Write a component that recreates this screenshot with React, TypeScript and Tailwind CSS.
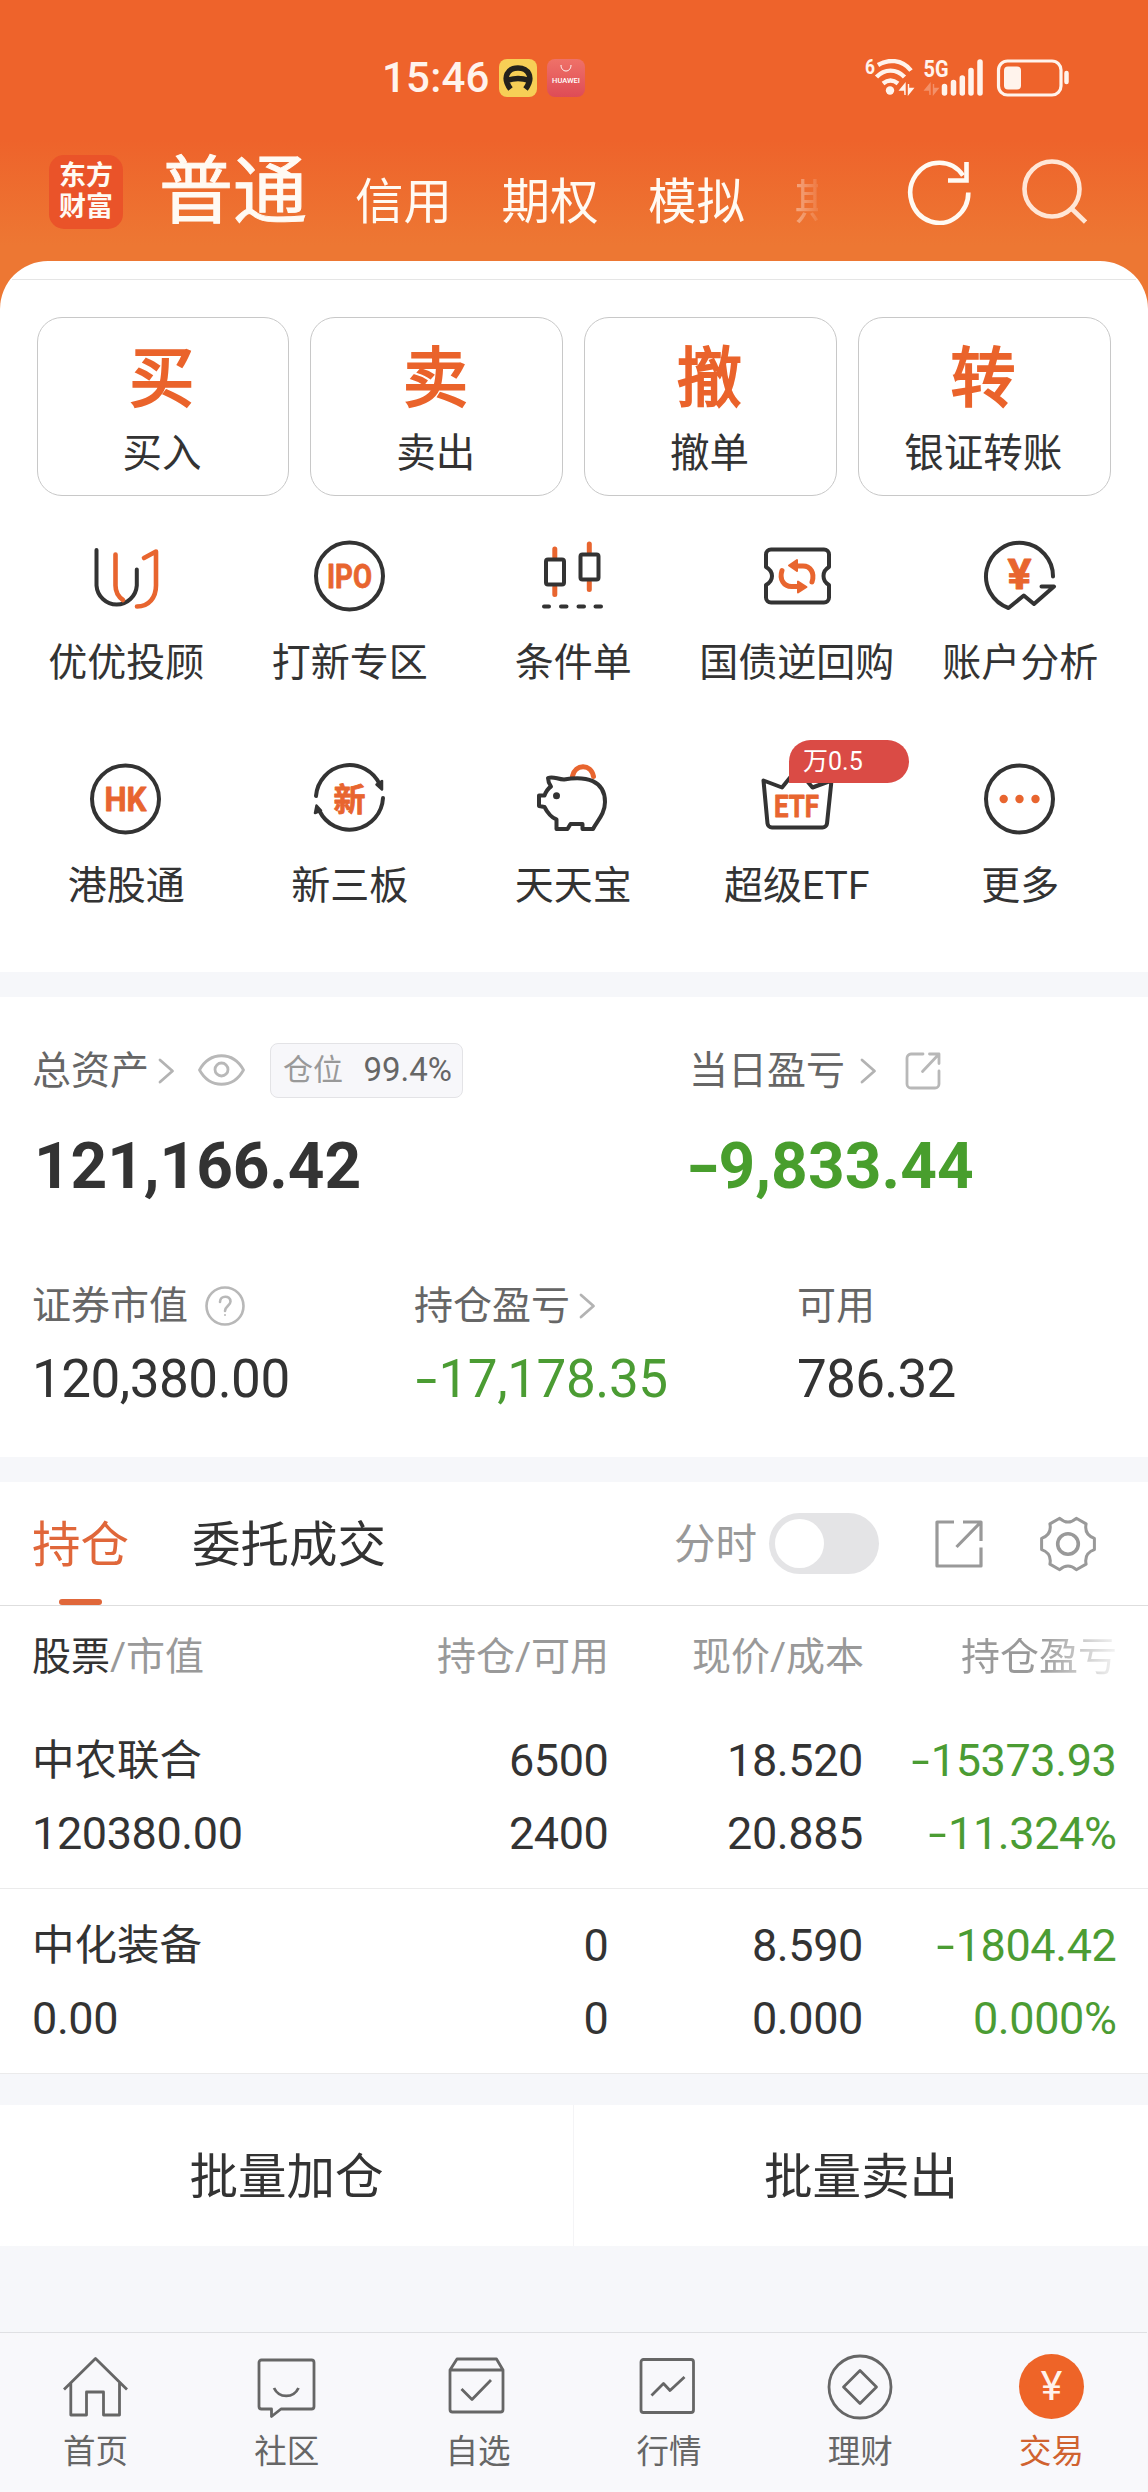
import type { ReactNode } from "react";

const ORANGE = "#e8652f";
const DARK = "#333333";

interface ShortcutProps {
  label: string;
  icon: ReactNode;
  badge?: string;
}

function Glyph({ children }: { children: ReactNode }) {
  return (
    <svg className="w-[76px] h-[76px] overflow-visible" viewBox="0 0 76 76" fill="none" stroke={DARK} strokeWidth="4" strokeLinecap="round" strokeLinejoin="round">
      {children}
    </svg>
  );
}

function GlyphText({ text, width, size, y }: { text: string; width: number; size: number; y: number }) {
  return (
    <text x="37.5" y={y} textAnchor="middle" textLength={width} lengthAdjust="spacingAndGlyphs" fontSize={size} fontWeight="700" fill={ORANGE} stroke={ORANGE} strokeWidth="0.8">
      {text}
    </text>
  );
}

const shortcuts: ShortcutProps[] = [
  {
    label: "优优投顾",
    icon: (
      <Glyph>
        <path d="M8.5 12v35.5a20.2 20.5 0 0 0 40.3 0V31.5" />
        <path d="M27.5 16.5v31c0 6.500 2.500 11 7.500 14.500M49 68.500c12 0 19-9 19-21v-34L56 20" stroke={ORANGE} strokeWidth="4.600" />
      </Glyph>
    ),
  },
  {
    label: "打新专区",
    icon: (
      <Glyph>
        <circle cx="37.500" cy="38" r="33.500" />
        <GlyphText text="IPO" width={45} size={33} y={49.8} />
      </Glyph>
    ),
  },
  {
    label: "条件单",
    icon: (
      <Glyph>
        <path d="M19.800 11v8M19.800 49v7.500M54.300 6v8M54.300 44v7.500" stroke={ORANGE} strokeWidth="5" />
        <rect x="11" y="21.500" width="18" height="25" rx="2" />
        <rect x="45.500" y="16.500" width="18" height="25" rx="2" />
        <path d="M9 68.500h5M26 68.500h5.500M43.500 68.500H49M60.500 68.500H66" />
      </Glyph>
    ),
  },
  {
    label: "国债逆回购",
    icon: (
      <Glyph>
        <path d="M12 11.500h53a5 5 0 0 1 5 5V29c-3.500 2-5.500 5-5.500 9s2 7 5.500 9v12.500a5 5 0 0 1-5 5H12a5 5 0 0 1-5-5V47c3.500-2 6-5 6-9s-2.500-7-6-9V16.500a5 5 0 0 1 5-5z" />
        <path d="M53 44c3-9-1.500-16-9-16h-6M23 32.500c-3 9 2 16 9.500 16H39" stroke={ORANGE} strokeWidth="5" />
        <path d="M30 27.500l8-5.500v11zM47.500 49l-8.500-5.500v11z" fill={ORANGE} stroke={ORANGE} strokeWidth="2" />
      </Glyph>
    ),
  },
  {
    label: "账户分析",
    icon: (
      <Glyph>
        <path d="M71 38.500A33.500 33.500 0 1 0 26.500 70L41.800 57.500 52 66 72 48.500H59.500" />
        <GlyphText text="¥" width={24} size={42} y={50.5} />
      </Glyph>
    ),
  },
  {
    label: "港股通",
    icon: (
      <Glyph>
        <circle cx="37.500" cy="38" r="33.500" />
        <GlyphText text="HK" width={42} size={33} y={49.8} />
      </Glyph>
    ),
  },
  {
    label: "新三板",
    icon: (
      <Glyph>
        <path d="M4 35A33.500 33.500 0 0 1 68 24M71 37A33.500 33.500 0 0 1 7.500 50" />
        <path d="M70 28.500l-5.500-5 5.500-3.500zM4.500 44.500l4.500 5-6 2.500z" fill={DARK} strokeWidth="2.500" />
        <GlyphText text="新" width={32} size={32} y={49.5} />
      </Glyph>
    ),
  },
  {
    label: "天天宝",
    icon: (
      <Glyph>
        <path d="M37.500 15C40 3 56 2 58.500 15.500" stroke={ORANGE} strokeWidth="5" />
        <path d="M13 17c5-2 9 1 16 1.500 22-4 41 1 41 22.500 0 12-8 19-12 27H47.500v-5H35.500l-3 5h-11V58.500C17 57 12 51 9.500 46L4 45V34.500h5.500c1.500-4 3.500-7 6.500-9-2-3-3-5-3-8.500z" />
        <circle cx="21.500" cy="34.700" r="3.500" fill={DARK} stroke="none" />
      </Glyph>
    ),
  },
  {
    label: "超级ETF",
    badge: "万0.5",
    icon: (
      <Glyph>
        <path d="M4.500 19.500L23 26.500 38 8l15.500 18.500 19-7L68 62.500a4.500 4.500 0 0 1-4.500 4H13a4.500 4.500 0 0 1-4.500-4z" />
        <GlyphText text="ETF" width={45} size={32} y={56} />
      </Glyph>
    ),
  },
  {
    label: "更多",
    icon: (
      <Glyph>
        <circle cx="37.500" cy="38" r="33.500" />
        <g fill={ORANGE} stroke="none">
          <circle cx="21.700" cy="38" r="4.200" />
          <circle cx="37.500" cy="38" r="4.200" />
          <circle cx="53.500" cy="38" r="4.200" />
        </g>
      </Glyph>
    ),
  },
];

const actions = [
  { mark: "买", label: "买入" },
  { mark: "卖", label: "卖出" },
  { mark: "撤", label: "撤单" },
  { mark: "转", label: "银证转账" },
];

const holdings = [
  { name: "中农联合", value: "120380.00", held: "6500", usable: "2400", price: "18.520", cost: "20.885", profit: "-15373.93", rate: "-11.324%" },
  { name: "中化装备", value: "0.00", held: "0", usable: "0", price: "8.590", cost: "0.000", profit: "-1804.42", rate: "0.000%" },
];

const tabs = [
  {
    label: "首页",
    icon: <path d="M1 35.500L32.500 4.500l31.500 31M7.800 29v32h15.700V38h17v23h16V29" />,
  },
  {
    label: "社区",
    icon: <path d="M7.500 6h50a2.500 2.500 0 0 1 2.500 2.500v44a2.500 2.500 0 0 1-2.500 2.500H27l-9.500 7.500V55h-10A2.500 2.500 0 0 1 5 52.500v-44A2.500 2.500 0 0 1 7.500 6zM20 34c5 10.500 19.500 10.500 24.500 0" />,
  },
  {
    label: "自选",
    icon: <path d="M5 16L12 5h39.500L58 16v39.500a2.500 2.500 0 0 1-2.500 2.500h-48A2.500 2.500 0 0 1 5 55.500zM5 16h53M16.500 35l10.500 10.500L46 26" />,
  },
  {
    label: "行情",
    icon: <path d="M7.500 5.500H55a2.500 2.500 0 0 1 2.500 2.500v48a2.500 2.500 0 0 1-2.500 2.500H7.500A2.500 2.500 0 0 1 5 56V8a2.500 2.500 0 0 1 2.500-2.500zM15.500 41.500l12-12 6.500 7 14.500-13.500" />,
  },
  {
    label: "理财",
    icon: (
      <>
        <circle cx="33" cy="33" r="31" />
        <path d="M33 16.500L49.500 33 33 49.500 16.500 33z" />
      </>
    ),
  },
];

// Minus sign is drawn wider than the font's own hyphen
function Amount({ value }: { value: string }) {
  if (!value.startsWith("-")) return <>{value}</>;
  return (
    <>
      <span className="inline-block w-[0.46em] text-center scale-x-[1.45]">-</span>
      {value.slice(1)}
    </>
  );
}

function Chevron() {
  return (
    <svg className="w-[17px] h-[26px]" viewBox="0 0 17 26" fill="none" stroke="#b3b3b3" strokeWidth="2.800" strokeLinecap="round" strokeLinejoin="round">
      <path d="M2 2l12.500 11L2 24" />
    </svg>
  );
}

function StatusBar() {
  return (
    <div className="flex h-[38px] items-center pl-[382px] pr-[77px]">
      <span className="w-[117px] text-[42px] font-medium leading-none tracking-[0.2px] text-[#fff3ec]">15:46</span>
      <span className="flex h-[38px] w-[38px] items-center justify-center rounded-[8px] bg-[#f7cf56]">
        <svg className="w-[30px] h-[26px]" viewBox="0 0 30 26" fill="none" stroke="#24221c" strokeWidth="5.500">
          <path d="M7.500 24C-1.500 12 5 3 15 3s16.500 9 7.500 21M4 15.500c7-2.500 15-2.500 22 0" />
        </svg>
      </span>
      <span className="ml-[10px] flex h-[38px] w-[38px] flex-col items-center rounded-[8px] bg-linear-to-b from-[#ef7168] to-[#de4b56] text-white">
        <svg className="mt-[5px] w-[12px] h-[8px]" viewBox="0 0 12 8" fill="none" stroke="currentColor" strokeWidth="1">
          <path d="M1 1c0 8 10 8 10 0" />
        </svg>
        <span className="mt-[4px] text-[7.500px] font-medium leading-[10px]">HUAWEI</span>
      </span>
      <svg className="ml-auto w-[206px] h-[38px]" viewBox="0 0 206 38" fill="none" stroke="#fff3ec" strokeWidth="4.400">
        <text x="0" y="15" fontSize="21" fontWeight="700" fill="#fff3ec" stroke="none" textLength="10" lengthAdjust="spacingAndGlyphs">6</text>
        <path d="M13 6c10-6 24-6 33 5.500" />
        <path d="M11.500 18c8-8.500 20-8.500 28 0" />
        <path d="M18 24.500c5-4 10-4 15 0" />
        <circle cx="25" cy="31.500" r="4.200" fill="#fff3ec" stroke="none" />
        <path d="M40 36V25l-5 6H39M43.500 25v10l4.500-5.500H44" fill="#fff3ec" strokeWidth="1.400" />
        <text x="58.500" y="17.500" fontSize="24" fontWeight="700" fill="#fff3ec" stroke="none" textLength="25" lengthAdjust="spacingAndGlyphs">5G</text>
        <path d="M65 36V25l-5 6H64M68.500 25v10l4.500-5.500H69" fill="#f3916a" stroke="#f3916a" strokeWidth="1.400" />
        <path d="M79.500 27.500v6.500M88.500 23.500V34M97.300 19v15M106 11.500V34M115 3V34" strokeWidth="5.500" strokeLinecap="round" />
        <rect x="133.500" y="2" width="62.500" height="34" rx="9" strokeWidth="3.200" />
        <rect x="139" y="7.500" width="17" height="23" rx="4" fill="#fff3ec" stroke="none" />
        <path d="M201.500 14v9" strokeWidth="4.500" strokeLinecap="round" />
      </svg>
    </div>
  );
}

function TopNav() {
  return (
    <div className="mt-[58px] flex h-[106px] items-start pl-[49px] text-[#fffaf3]">
      <div className="flex h-[74px] w-[74px] flex-col items-center justify-center rounded-[15px] bg-[#ea5329] text-[27px] font-bold leading-[31px]">
        <span>东方</span>
        <span>财富</span>
      </div>
      <span className="ml-[36px] text-[74px] leading-none [-webkit-text-stroke:1px]">普通</span>
      <div className="ml-[48px] mt-[24px] flex gap-[49.500px] text-[48.500px] leading-none">
        <span>信用</span>
        <span>期权</span>
        <span>模拟</span>
        <span className="w-[23px] overflow-hidden whitespace-nowrap bg-linear-to-r from-white/40 to-white/10 bg-clip-text text-transparent">期</span>
      </div>
      <svg className="ml-auto mr-[61px] mt-[2px] w-[182px] h-[68px]" viewBox="0 0 182 68" fill="none" strokeWidth="4.600">
        <path d="M63.300 35.500A29 30 0 1 1 58 18.500" stroke="#fffaf3" />
        <path d="M61.500 5v18.500H43" stroke="#fffaf3" />
        <circle cx="147" cy="32" r="27.500" stroke="#ffe6d6" />
        <path d="M167 52L180.500 65" stroke="#ffe6d6" />
      </svg>
    </div>
  );
}

function Shortcut({ label, icon, badge }: ShortcutProps) {
  return (
    <div className="relative flex flex-col items-center">
      {icon}
      <span className="mt-[30px] whitespace-nowrap text-[39px] leading-none">{label}</span>
      {badge && (
        <span className="absolute left-[104px] top-[-21px] h-[43px] w-[120px] rounded-[22px] rounded-bl-none bg-[#da4b45] pl-[14px] text-[25px] leading-[44px] text-white">
          {badge}
        </span>
      )}
    </div>
  );
}

function Assets() {
  return (
    <section className="h-[460px] bg-white pl-[32px] pt-[46px] text-[39px] leading-none text-[#666]">
      <div className="flex">
        <div className="w-[657px]">
          <div className="flex h-[56px] items-center">
            <span>总资产</span>
            <span className="ml-[9px]"><Chevron /></span>
            <svg className="mb-[3px] ml-[23px] w-[47px] h-[36px]" viewBox="0 0 47 36" fill="none" stroke="#b8b8b8" strokeWidth="2.800">
              <path d="M1.500 18C12-1 35-1 45.500 18 35 37 12 37 1.500 18z" strokeLinejoin="round" />
              <circle cx="23.500" cy="17.500" r="6.500" />
            </svg>
            <span className="mb-[2px] ml-[25px] flex h-[55px] w-[193px] items-center justify-between rounded-[8px] border border-[#e3e3e6] bg-[#f7f7fa] pl-[12px] pr-[10px]">
              <span className="text-[30px] text-[#999]">仓位</span>
              <span className="pb-px text-[33px]">99.4%</span>
            </span>
          </div>
          <div className="ml-[2px] mt-[36px] text-[64px] font-bold tracking-[-0.1px] text-[#333]">121,166.42</div>
        </div>
        <div>
          <div className="flex h-[56px] items-center">
            <span>当日盈亏</span>
            <span className="ml-[15px]"><Chevron /></span>
            <svg className="ml-[28px] w-[36px] h-[38px]" viewBox="0 0 36 38" fill="none" stroke="#b8b8b8" strokeWidth="2.800" strokeLinecap="round" strokeLinejoin="round">
              <path d="M18 2H6a4 4 0 0 0-4 4v26a4 4 0 0 0 4 4h24a4 4 0 0 0 4-4V19M24.500 2H34v9.500M34 2L17.500 19.500" />
            </svg>
          </div>
          <div className="mt-[36px] text-[64px] font-bold tracking-[0.100px] text-[#489e2d]">
            <Amount value="-9,833.44" />
          </div>
        </div>
      </div>
      <div className="mt-[87px] flex">
        <div className="w-[382px]">
          <div className="flex h-[40px] items-center">
            证券市值
            <svg className="ml-[17px] w-[40px] h-[40px]" viewBox="0 0 40 40" fill="none" stroke="#b8b8b8" strokeWidth="2.600">
              <circle cx="20" cy="20" r="18.500" />
              <path d="M15 16c0-7 10.500-7 10.500-.5 0 4-5.500 4.500-5.500 9.500" strokeLinecap="round" />
              <circle cx="20" cy="29" r="1" fill="#b8b8b8" stroke="none" />
            </svg>
          </div>
          <div className="mt-[27px] text-[53px] tracking-[-0.500px] text-[#333]">120,380.00</div>
        </div>
        <div className="w-[383px]">
          <div className="flex h-[40px] items-center">
            持仓盈亏
            <span className="ml-[9px]"><Chevron /></span>
          </div>
          <div className="mt-[27px] text-[53px] tracking-[-0.400px] text-[#4b9c33]">
            <Amount value="-17,178.35" />
          </div>
        </div>
        <div>
          <div className="flex h-[40px] items-center">可用</div>
          <div className="mt-[27px] text-[53px] tracking-[-0.700px] text-[#333]">786.32</div>
        </div>
      </div>
    </section>
  );
}

function HoldingTabs() {
  return (
    <div className="flex h-[124px] items-center border-b border-[#dedede] bg-white pl-[32px] pr-[52px] text-[48.500px] leading-none">
      <div className="relative flex h-full items-center pt-[5px] text-[#e0673a]">
        持仓
        <span className="absolute bottom-0 left-[27px] h-[6px] w-[43px] rounded-full bg-[#e0673a]" />
      </div>
      <span className="ml-[63px] pt-[5px]">委托成交</span>
      <span className="ml-auto pt-[3px] text-[41.500px] text-[#999]">分时</span>
      <span className="ml-[12px] flex h-[61px] w-[110px] items-center rounded-full bg-[#e4e4e6] pl-[6px]">
        <span className="h-[49px] w-[49px] rounded-full bg-white" />
      </span>
      <svg className="ml-[55px] w-[49px] h-[50px]" viewBox="0 0 49 50" fill="none" stroke="#999" strokeWidth="3.200" strokeLinejoin="round">
        <path d="M20 3H3v44h44V28.500M29 3h18v19M46 4L22.500 28" />
      </svg>
      <svg className="ml-[57px] w-[56px] h-[56px]" viewBox="0 0 56 56" fill="none" stroke="#999" strokeWidth="3" strokeLinejoin="round">
        <path d="M54.400 22.400v11.200Q43.900 37.200 46.100 48.100L36.300 53.700Q28 46.300 19.700 53.700L9.900 48.100Q12.100 37.200 1.600 33.600V22.400Q12.100 18.800 9.900 7.900L19.700 2.300Q28 9.700 36.300 2.300L46.100 7.900Q43.900 18.800 54.400 22.400z" />
        <circle cx="28" cy="28" r="10.300" strokeWidth="3.600" />
      </svg>
    </div>
  );
}

function HoldingTable() {
  return (
    <div className="bg-white">
      <div className="grid h-[98px] grid-cols-[322px_255px_255px_253px] pl-[32px] pt-[32px] text-[39px] leading-none text-[#999]">
        <span><span className="text-[#333]">股票</span>/市值</span>
        <span className="text-right">持仓/可用</span>
        <span className="text-right">现价/成本</span>
        <span className="flex justify-end">
          <span className="bg-[linear-gradient(to_right,#999_50%,#f4f4f4)] bg-clip-text text-transparent">持仓盈亏</span>
        </span>
      </div>
      {holdings.map((row) => (
        <div key={row.name} className="grid h-[185px] grid-cols-[322px_254.500px_254.500px_253.500px] grid-rows-[46px_46px] gap-y-[27px] border-b border-[#ebebeb] pl-[32px] pt-[34px] text-right text-[45px] leading-[46px] tracking-[-0.400px]">
          <span className="text-left text-[42.500px] tracking-normal">{row.name}</span>
          <span>{row.held}</span>
          <span>{row.price}</span>
          <span className="text-[#4b9c33]"><Amount value={row.profit} /></span>
          <span className="text-left">{row.value}</span>
          <span>{row.usable}</span>
          <span>{row.cost}</span>
          <span className="text-[#4b9c33]"><Amount value={row.rate} /></span>
        </div>
      ))}
    </div>
  );
}

function BottomNav() {
  return (
    <nav className="mt-[86px] grid h-[160px] w-[1147px] grid-cols-6 border-t border-[#dfe0e3] bg-[#f8f8fb] pt-[21px] text-[32.500px] leading-none text-[#666]">
      {tabs.map((tab) => (
        <div key={tab.label} className="flex flex-col items-center">
          <svg className="w-[66px] h-[66px]" viewBox="0 0 66 66" fill="none" stroke="#666" strokeWidth="2.800" strokeLinejoin="round">
            {tab.icon}
          </svg>
          <span className="mt-[16px]">{tab.label}</span>
        </div>
      ))}
      <div className="flex flex-col items-center text-[#d0622f]">
        <span className="flex h-[65px] w-[65px] items-center justify-center rounded-full bg-[#ee6428] text-[41px] text-[#fff3ec]">¥</span>
        <span className="mt-[17px]">交易</span>
      </div>
    </nav>
  );
}

export default function App() {
  return (
    <div className="h-[2492px] w-[1148px] overflow-hidden bg-[#f6f7fa] font-['Roboto','Noto_Sans_CJK_SC',sans-serif] text-[#333]">
      <div className="bg-[linear-gradient(#ee632b_0px,#ee632b_140px,#ed7733_245px,#ed7733_320px)]">
        <header className="h-[261px] pt-[59px]">
          <StatusBar />
          <TopNav />
        </header>
        <section className="h-[711px] rounded-t-[48px] bg-white pt-[18px]">
          <div className="mx-[12px] h-px bg-[#e5e5e5]" />
          <div className="mt-[37px] grid grid-cols-4 gap-[21px] pl-[36.500px] pr-[37.500px]">
            {actions.map((action) => (
              <div key={action.label} className="flex h-[179px] flex-col items-center rounded-[25px] border border-[#c8c8c8] pr-[2px] pt-[29px]">
                <span className="text-[65px] leading-none text-[#ea632b] [-webkit-text-stroke:2.200px]">{action.mark}</span>
                <span className="mt-[22px] text-[39.500px] leading-none">{action.label}</span>
              </div>
            ))}
          </div>
          <div className="mt-[42px] grid grid-cols-5 gap-y-[78px] pl-[14.500px] pr-[16px]">
            {shortcuts.map((item) => (
              <Shortcut key={item.label} {...item} />
            ))}
          </div>
        </section>
      </div>
      <div className="h-[25px]" />
      <Assets />
      <div className="h-[25px]" />
      <HoldingTabs />
      <HoldingTable />
      <div className="mt-[31px] grid h-[141px] grid-cols-2 bg-white pt-[5px] text-[48.500px] leading-none">
        <span className="-mt-[5px] flex items-center justify-center border-r border-[#f4f4f6] pt-[5px]">批量加仓</span>
        <span className="flex items-center justify-center">批量卖出</span>
      </div>
      <BottomNav />
    </div>
  );
}
